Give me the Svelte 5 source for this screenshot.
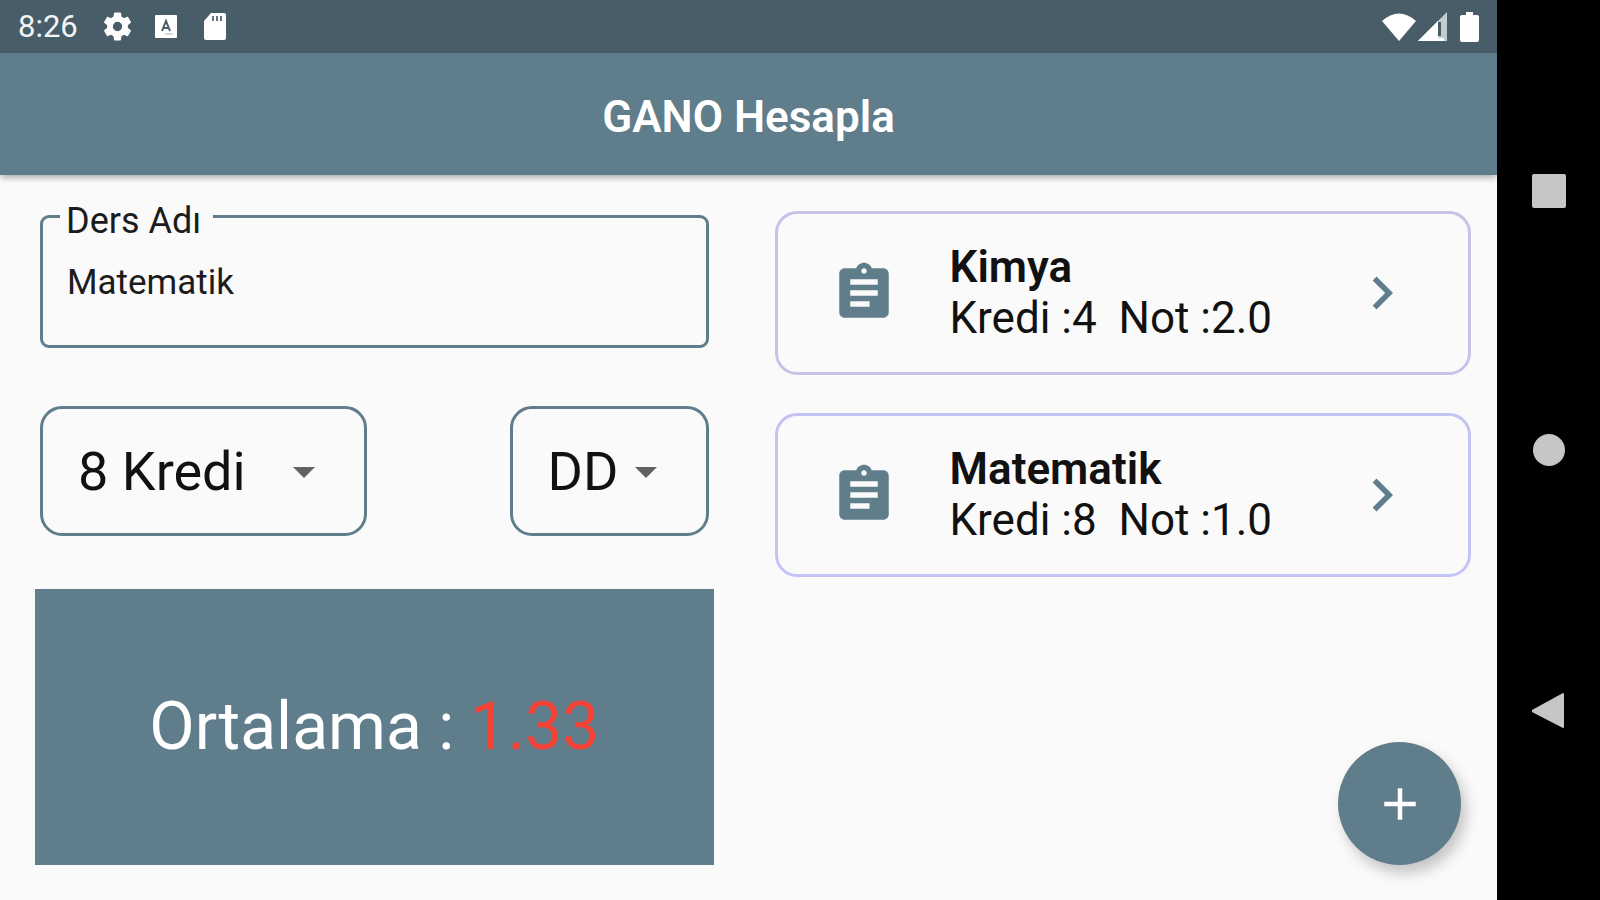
<script>
  const grades = { AA: 4, BA: 3.5, BB: 3, CB: 2.5, CC: 2, DC: 1.5, DD: 1, FD: 0.5, FF: 0 }
  const credits = [1, 2, 3, 4, 5, 6, 7, 8, 9, 10]
  const borders = ["#c9c1e8", "#c3c3f5"]

  let name = $state("Matematik")
  let credit = $state(8)
  let grade = $state("DD")
  let courses = $state([
    { name: "Kimya", credit: 4, point: 2 },
    { name: "Matematik", credit: 8, point: 1 },
  ])

  let average = $derived.by(() => {
    const total = courses.reduce((sum, c) => sum + c.credit, 0)
    const points = courses.reduce((sum, c) => sum + c.credit * c.point, 0)
    return total ? points / total : 0
  })

  function addCourse() {
    if (!name.trim())
      return
    courses.push({ name, credit, point: grades[grade] })
  }
</script>

<div class="device">
  <div class="app">
    <div class="status-bar">
      <span class="time">8:26</span>
      <svg class="gear" viewBox="2 2 20 20" width="29" height="29">
        <path d="M19.14 12.94c.04-.3.06-.61.06-.94 0-.32-.02-.64-.07-.94l2.03-1.58c.18-.14.23-.41.12-.61l-1.92-3.32c-.12-.22-.37-.29-.59-.22l-2.39.96c-.5-.38-1.03-.7-1.62-.94l-.36-2.54c-.04-.24-.24-.41-.48-.41h-3.84c-.24 0-.43.17-.47.41l-.36 2.54c-.59.24-1.13.57-1.62.94l-2.39-.96c-.22-.08-.47 0-.59.22L2.74 8.87c-.12.21-.08.47.12.61l2.03 1.58c-.05.3-.09.63-.09.94s.02.64.07.94l-2.03 1.58c-.18.14-.23.41-.12.61l1.92 3.32c.12.22.37.29.59.22l2.39-.96c.5.38 1.03.7 1.62.94l.36 2.54c.05.24.24.41.48.41h3.84c.24 0 .44-.17.47-.41l.36-2.54c.59-.24 1.13-.56 1.62-.94l2.39.96c.22.08.47 0 .59-.22l1.92-3.32c.12-.22.07-.47-.12-.61l-2.01-1.58zM12 15.2a3.2 3.2 0 1 1 0-6.4 3.2 3.2 0 0 1 0 6.4z" />
      </svg>
      <svg class="keyboard" viewBox="0 0 22 23" width="22" height="23">
        <rect width="22" height="23" rx="1" />
        <path d="M7 16l4-10 4 10M8 13h6" fill="none" stroke="#485d67" stroke-width="2" />
        <path d="M10 19h8" stroke="#a9b5bb" stroke-width="1" />
      </svg>
      <svg class="card-icon" viewBox="0 0 24 29" width="24" height="29">
        <path d="M8 1h13a2 2 0 0 1 2 2v23a2 2 0 0 1-2 2H3a2 2 0 0 1-2-2V9z" />
        <path d="M9 4h2v5H9zM13 4h2v5h-2zM17 4h2v5h-2z" fill="#65767e" />
      </svg>
      <div class="signals">
        <svg viewBox="0 0 34 28" width="34" height="28">
          <path d="M17 28L0 8Q17-7 34 8z" />
        </svg>
        <svg viewBox="0 0 30 29" width="30" height="29">
          <path d="M0 29L29 0v29z" fill="#c3cbd0" />
          <path d="M0 29L20 9v20z" />
          <path d="M20 10h3v14h-3z" fill="#485d67" />
          <path d="M20 26h6v3h-6z" />
        </svg>
        <svg class="battery" viewBox="0 0 19 30" width="19" height="30">
          <path d="M6 0h7v3h4a2 2 0 0 1 2 2v23a2 2 0 0 1-2 2H2a2 2 0 0 1-2-2V5a2 2 0 0 1 2-2h4z" />
        </svg>
      </div>
    </div>

    <header>
      <h1>GANO Hesapla</h1>
    </header>

    <main>
      <section class="form">
        <fieldset>
          <legend><label for="course">Ders Adı</label></legend>
          <input id="course" type="text" autocomplete="off" spellcheck="false" bind:value={name} />
        </fieldset>

        <div class="pickers">
          <div class="picker wide">
            <select aria-label="Kredi" bind:value={credit}>
              {#each credits as value}
                <option {value}>{value} Kredi</option>
              {/each}
            </select>
            <svg viewBox="0 0 22 11" width="22" height="11"><path d="M0 0h22L11 11z" /></svg>
          </div>
          <div class="picker">
            <select aria-label="Not" bind:value={grade}>
              {#each Object.keys(grades) as value}
                <option {value}>{value}</option>
              {/each}
            </select>
            <svg viewBox="0 0 22 11" width="22" height="11"><path d="M0 0h22L11 11z" /></svg>
          </div>
        </div>

        <p class="average">Ortalama : <span>{average.toFixed(2)}</span></p>
      </section>

      <ul class="courses">
        {#each courses as course, i}
          <li style="border-color: {borders[i % borders.length]}">
            <svg viewBox="0 0 24 24" width="66" height="66">
              <path d="M19 3h-4.18C14.4 1.84 13.3 1 12 1c-1.3 0-2.4.84-2.82 2H5c-1.1 0-2 .9-2 2v14c0 1.1.9 2 2 2h14c1.1 0 2-.9 2-2V5c0-1.1-.9-2-2-2zm-7 0c.55 0 1 .45 1 1s-.45 1-1 1-1-.45-1-1 .45-1 1-1zm2 14H7v-2h7v2zm3-4H7v-2h10v2zm0-4H7V7h10v2z" />
            </svg>
            <div class="text">
              <h2>{course.name}</h2>
              <p>{`Kredi :${course.credit}  Not :${course.point.toFixed(1)}`}</p>
            </div>
            <svg viewBox="0 0 24 24" width="66" height="66">
              <path d="M10 6L8.59 7.41 13.17 12l-4.58 4.59L10 18l6-6z" />
            </svg>
          </li>
        {/each}
      </ul>
    </main>

    <button class="add" aria-label="Ekle" onclick={addCourse}>
      <svg viewBox="0 0 24 24" width="54" height="54">
        <path d="M19 13h-6v6h-2v-6H5v-2h6V5h2v6h6v2z" />
      </svg>
    </button>
  </div>

  <nav>
    <button aria-label="Recent apps">
      <svg viewBox="0 0 34 34" width="34" height="34"><rect width="34" height="34" rx="2" /></svg>
    </button>
    <button aria-label="Home">
      <svg viewBox="0 0 34 34" width="34" height="34"><circle cx="17" cy="17" r="16" /></svg>
    </button>
    <button aria-label="Back">
      <svg viewBox="0 0 34 38" width="34" height="38"><path d="M0 18L31 1q1 0 1 1v33q0 1-1 1L0 20q-1-1 0-2z" /></svg>
    </button>
  </nav>
</div>

<style>
  :global(body) {
    margin: 0;
  }

  .device {
    --primary: #607d8b;
    display: flex;
    min-height: 100vh;
    background: #000;
    font-family: Roboto, "Noto Sans", sans-serif;
    color: #1c1c1c;

    * {
      box-sizing: border-box;
    }
  }

  h1, h2, p, ul {
    margin: 0;
    padding: 0;
  }

  svg {
    display: block;
    flex: none;
  }

  .app {
    position: relative;
    flex: 1;
    display: flex;
    flex-direction: column;
    background: #fafafa;
  }

  .status-bar {
    display: flex;
    align-items: center;
    height: 53px;
    padding: 0 18px;
    background: #485d67;
    fill: #fff;

    .time {
      font-size: 31px;
      line-height: 36px;
      color: #f2f5f6;
    }

    .gear {
      margin-left: 25px;
    }

    .keyboard {
      margin-left: 23px;
    }

    .card-icon {
      margin-left: 26px;
    }

    .signals {
      display: flex;
      align-items: center;
      gap: 2px;
      margin-left: auto;
    }

    .battery {
      margin-left: 10px;
    }
  }

  header {
    display: flex;
    align-items: center;
    justify-content: center;
    height: 122px;
    padding-top: 5px;
    background: var(--primary);
    box-shadow: 0 4px 6px -1px rgba(0, 0, 0, 0.3);
  }

  h1 {
    font-size: 44px;
    font-weight: 600;
    line-height: 52px;
    color: #fff;
  }

  main {
    flex: 1;
    display: grid;
    grid-template-columns: 1fr 1fr;
  }

  .form {
    display: flex;
    flex-direction: column;
    padding: 18px 35px 35px;
  }

  fieldset {
    min-width: 0;
    margin: 0 5px;
    padding: 17px 24px 37px;
    border: 3px solid var(--primary);
    border-radius: 9px;
  }

  legend {
    margin-left: -7px;
    padding: 10px 12px 0 6px;
    font-size: 36px;
    line-height: 36px;
  }

  fieldset input {
    display: block;
    width: 100%;
    height: 52px;
    padding: 0;
    border: 0;
    outline: 0;
    background: none;
    font: inherit;
    font-size: 35px;
    color: inherit;
  }

  .pickers {
    display: flex;
    justify-content: space-between;
    margin: 58px 5px 53px;
  }

  .picker {
    position: relative;

    select {
      appearance: none;
      width: 199px;
      height: 130px;
      padding: 0 35px;
      border: 3px solid var(--primary);
      border-radius: 22px;
      outline: 0;
      background: none;
      font: inherit;
      font-size: 54px;
      color: #111;
    }

    svg {
      position: absolute;
      top: 61px;
      right: 52px;
      fill: #616161;
      pointer-events: none;
    }
  }

  .picker.wide select {
    width: 327px;
  }

  .average {
    flex: 1;
    display: flex;
    align-items: center;
    justify-content: center;
    background: var(--primary);
    font-size: 66px;
    line-height: 78px;
    white-space: pre;
    color: #fff;

    span {
      color: #f44336;
    }
  }

  .courses {
    display: flex;
    flex-direction: column;
    gap: 38px;
    padding: 36px 26px;
    list-style: none;
  }

  li {
    display: flex;
    align-items: center;
    padding: 28px 53px;
    border: 3px solid;
    border-radius: 22px;
    fill: var(--primary);
  }

  .text {
    flex: 1;
    padding-left: 53px;
    color: #111;

    h2, p {
      font-size: 44px;
      line-height: 51px;
      white-space: pre;
    }

    h2 {
      font-weight: 600;
    }
  }

  .add {
    position: absolute;
    right: 36px;
    bottom: 35px;
    display: flex;
    align-items: center;
    justify-content: center;
    width: 123px;
    height: 123px;
    padding: 0;
    border: 0;
    border-radius: 50%;
    background: var(--primary);
    fill: #fff;
    box-shadow: 5px 8px 14px rgba(0, 0, 0, 0.22);
    cursor: pointer;
  }

  nav {
    display: flex;
    flex-direction: column;
    align-items: center;
    justify-content: center;
    gap: 225px;
    width: 103px;
    padding-top: 3px;

    button {
      padding: 0;
      border: 0;
      background: none;
      fill: #c6c6c6;
      cursor: pointer;
    }
  }
</style>
